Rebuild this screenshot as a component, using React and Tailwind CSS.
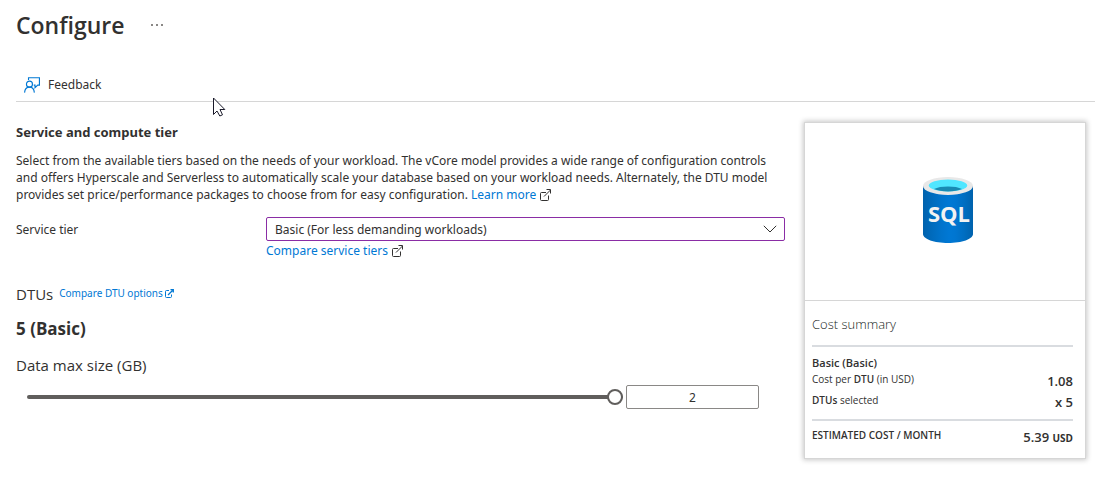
import { useState } from "react";

function ExternalIcon({ className }) {
  return (
    <svg viewBox="0 0 11 12" className={className} fill="none" stroke="currentColor" aria-hidden="true">
      <path d="M6 3.500H1.500a1 1 0 0 0-1 1v6a1 1 0 0 0 1 1h6a1 1 0 0 0 1-1V6.500M4 7.500 10.500 1M6.500.5h4v4" />
    </svg>
  );
}

function SmallExternalIcon({ className }) {
  return (
    <svg viewBox="0 0 9 9" className={className} fill="none" stroke="currentColor" aria-hidden="true">
      <path d="M4 1.500H1.500a1 1 0 0 0-1 1v5a1 1 0 0 0 1 1h4a1 1 0 0 0 1-1V5.500" />
      <path d="M3 6 7.500 1.500M5.500.7h2.800v2.800" strokeWidth="1.300" />
    </svg>
  );
}

function FeedbackIcon() {
  return (
    <svg viewBox="0 0 17 17" className="size-4" fill="none" stroke="#0078d4" strokeWidth="1.200" aria-hidden="true">
      <circle cx="5.800" cy="7.600" r="3.200" />
      <path d="M.6 16.600c.3-3.400 2.300-5.800 5.200-5.800s4.900 2.400 5.200 5.800" />
      <path d="M4.800 3.200V.8h11.600v7.800h-1.800l-2.900 2.700V8.600h-1.400" />
    </svg>
  );
}

function SqlLogo() {
  return (
    <svg viewBox="0 0 50 66" className="h-[66px] w-[50px]" role="img" aria-label="SQL database">
      <defs>
        <linearGradient id="cylinder" x1="0" x2="1" y1="0" y2="0">
          <stop offset="0" stopColor="#0062ad" />
          <stop offset=".07" stopColor="#0066b4" />
          <stop offset=".36" stopColor="#0073cb" />
          <stop offset=".52" stopColor="#0078d4" />
          <stop offset=".64" stopColor="#0076d1" />
          <stop offset=".82" stopColor="#006ec2" />
          <stop offset="1" stopColor="#0062ad" />
        </linearGradient>
      </defs>
      <path d="M0 9v48c0 5 11.200 9 25 9s25-4 25-9V9z" fill="url(#cylinder)" />
      <ellipse cx="25" cy="9" rx="25" ry="9" fill="#e8e8e8" />
      <ellipse cx="25" cy="8.500" rx="19.200" ry="5.900" fill="#50e6ff" />
      <path d="M11 12C14.500 10.300 19 9.500 25 9.500s10.500.8 14 2.500c-3.500 1.500-8.500 2.400-14 2.400S14.500 13.500 11 12z" fill="#198ab3" />
      <text x="26" y="45" textAnchor="middle" fill="#f2f2f2" className="font-['Open_Sans'] text-[22px] font-bold">
        SQL
      </text>
    </svg>
  );
}

function Cursor() {
  return (
    <svg viewBox="0 0 13 20" className="absolute left-[213px] top-[97px] h-5 w-[13px]" aria-hidden="true">
      <path d="M.5 1v16.500L4 14l2.800 5 2.700-1.200L7 12.500h4.800z" fill="#fff" stroke="#1a1a2a" />
    </svg>
  );
}

export default function App() {
  const [size, setSize] = useState("2");
  return (
    <div className="relative bg-white pb-10 pl-4 font-['Noto_Sans','Open_Sans',sans-serif] text-[12px] leading-[17px] text-[#323130]">
      <header>
        <div className="flex h-[50px] items-center gap-[26px]">
          <h1 className="font-['Open_Sans'] text-[23px] font-semibold leading-8">Configure</h1>
          <button type="button" aria-label="More options" className="flex gap-[3px]">
            <span className="size-[2px] bg-[#8a8886]" />
            <span className="size-[2px] bg-[#8a8886]" />
            <span className="size-[2px] bg-[#8a8886]" />
          </button>
        </div>
        <div className="flex h-[52px] items-end border-b border-[#d6d6d6] px-2 pb-2">
          <button type="button" className="flex items-center gap-2">
            <FeedbackIcon />
            Feedback
          </button>
        </div>
      </header>

      <div className="flex items-start gap-[19px] pr-[9px] pt-5">
        <main className="min-w-0 flex-1">
          <h2 className="mt-[2px] text-[13px] font-bold">Service and compute tier</h2>
          <p className="mt-[11px]">
            Select from the available tiers based on the needs of your workload. The vCore model provides a wide range of
            configuration controls and offers Hyperscale and Serverless to automatically scale your database based on your
            workload needs. Alternately, the DTU model provides set price/performance packages to choose from for easy
            configuration.{" "}
            <a href="#learn" className="inline-flex items-center gap-1 text-[#0078d4]">
              Learn more
              <ExternalIcon className="h-3 w-[11px] text-[#323130]" />
            </a>
          </p>

          <div className="mt-[14px] flex">
            <label htmlFor="tier" className="w-[250px] shrink-0 pt-1">
              Service tier
            </label>
            <div className="min-w-0 flex-1">
              <div className="grid items-center">
                <select
                  id="tier"
                  className="col-start-1 row-start-1 h-6 w-full appearance-none rounded-[2px] border border-[#8a2da5] bg-white px-2 outline-none"
                >
                  <option>Basic (For less demanding workloads)</option>
                </select>
                <svg
                  viewBox="0 0 14 8"
                  className="pointer-events-none col-start-1 row-start-1 mr-2 h-2 w-[14px] justify-self-end"
                  fill="none"
                  stroke="#323130"
                  aria-hidden="true"
                >
                  <path d="m.8.8 6.200 6.200L13.200.8" />
                </svg>
              </div>
              <a href="#tiers" className="flex items-center gap-1 pt-px text-[#0078d4]">
                Compare service tiers
                <ExternalIcon className="h-3 w-[11px] text-[#323130]" />
              </a>
            </div>
          </div>

          <div className="mt-[25px] flex items-center gap-[6px] font-['Open_Sans']">
            <span className="text-[15px] leading-5">DTUs</span>
            <a href="#dtu" className="flex items-center gap-[2px] pb-[2px] font-['Noto_Sans'] text-[10px] text-[#0078d4]">
              Compare DTU options
              <SmallExternalIcon className="size-[9px]" />
            </a>
          </div>
          <h3 className="mt-[13px] font-['Open_Sans'] text-[17px] font-bold leading-6">5 (Basic)</h3>
          <label htmlFor="size" className="mt-[14px] block font-['Open_Sans'] text-[15px] leading-5">
            Data max size (GB)
          </label>
          <div className="mt-[10px] flex items-center gap-[3px] pl-[11px] pr-[26px]">
            <input
              type="range"
              aria-label="Data max size slider"
              min="0"
              max="2"
              value={size}
              onChange={(e) => setSize(e.target.value)}
              className="h-4 min-w-0 flex-1 appearance-none bg-transparent [&::-webkit-slider-runnable-track]:h-1 [&::-webkit-slider-runnable-track]:rounded-[2px] [&::-webkit-slider-runnable-track]:bg-[#605e5c] [&::-webkit-slider-thumb]:-mt-[6px] [&::-webkit-slider-thumb]:size-4 [&::-webkit-slider-thumb]:appearance-none [&::-webkit-slider-thumb]:rounded-full [&::-webkit-slider-thumb]:border-2 [&::-webkit-slider-thumb]:border-solid [&::-webkit-slider-thumb]:border-[#605e5c] [&::-webkit-slider-thumb]:bg-white"
            />
            <input
              id="size"
              type="text"
              value={size}
              onChange={(e) => setSize(e.target.value)}
              className="h-6 w-[133px] rounded-[2px] border border-[#8a8886] text-center"
            />
          </div>
        </main>

        <aside className="w-[282px] shrink-0 border border-[#d6d6d6] bg-white font-['Open_Sans','Noto_Sans',sans-serif] shadow-[0_0_5px_1px_rgba(0,0,0,0.22)]">
          <div className="flex h-[178px] items-center justify-center border-b border-[#d6d6d6] pb-1 pl-[6px]">
            <SqlLogo />
          </div>
          <div className="pl-[7px] pr-3 pt-[13px]">
            <h2 className="pb-[11px] text-[13px] font-light leading-5 text-[#201f1e]">Cost summary</h2>
            <div className="border-y-2 border-[#d9dce0] pb-[6px] pt-2">
              <h3 className="text-[11px] font-semibold leading-4">Basic (Basic)</h3>
              <div className="flex justify-between leading-[21px]">
                <span className="text-[10px] leading-4">
                  Cost per <b className="font-semibold">DTU</b> (in USD)
                </span>
                <span className="text-[13px] font-semibold">1.08</span>
              </div>
              <div className="flex justify-between leading-[21px]">
                <span className="text-[10px] leading-4">
                  <b className="font-semibold">DTUs</b> selected
                </span>
                <span className="text-[13px] font-semibold">x 5</span>
              </div>
            </div>
            <div className="flex justify-between pb-[10px] pt-[6px] font-semibold">
              <span className="text-[10px] leading-4">ESTIMATED COST / MONTH</span>
              <span className="text-[13px] leading-5">
                5.39 <span className="text-[10px] font-bold">USD</span>
              </span>
            </div>
          </div>
        </aside>
      </div>
      <Cursor />
    </div>
  );
}
